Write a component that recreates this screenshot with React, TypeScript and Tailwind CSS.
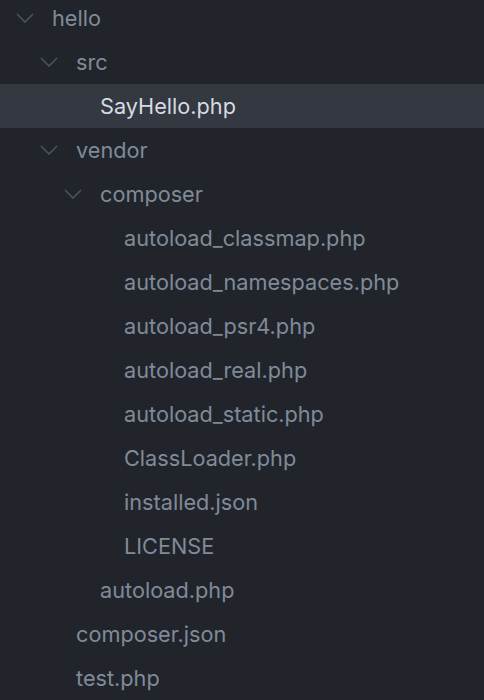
import React from 'react';

interface Node {
  name: string;
  depth: number;
  folder?: boolean;
  selected?: boolean;
}

const tree: Node[] = [
  { name: 'hello', depth: 0, folder: true },
  { name: 'src', depth: 1, folder: true },
  { name: 'SayHello.php', depth: 2, selected: true },
  { name: 'vendor', depth: 1, folder: true },
  { name: 'composer', depth: 2, folder: true },
  { name: 'autoload_classmap.php', depth: 3 },
  { name: 'autoload_namespaces.php', depth: 3 },
  { name: 'autoload_psr4.php', depth: 3 },
  { name: 'autoload_real.php', depth: 3 },
  { name: 'autoload_static.php', depth: 3 },
  { name: 'ClassLoader.php', depth: 3 },
  { name: 'installed.json', depth: 3 },
  { name: 'LICENSE', depth: 3 },
  { name: 'autoload.php', depth: 2 },
  { name: 'composer.json', depth: 1 },
  { name: 'test.php', depth: 1 },
];

const pad = ['pl-[16px]', 'pl-[40px]', 'pl-[64px]', 'pl-[88px]'];

const Chevron = () => (
  <svg width="18" height="10" viewBox="0 0 18 10" className="shrink-0">
    <path d="M1 1 L9 9 L17 1" fill="none" stroke="#4b5361" strokeWidth="1.6" />
  </svg>
);

export default function App() {
  return (
    <div className="h-[700px] w-[484px] overflow-hidden bg-[#21252b] font-['Inter',sans-serif]">
      <ul className="-mt-1">
        {tree.map((n) => (
          <li
            key={n.name + n.depth}
            className={`flex h-[44px] items-center ${pad[n.depth]} ${n.selected ? 'bg-[#333841] text-[#d7dae0]' : 'text-[#808a99]'}`}
          >
            <span className="flex w-[36px] shrink-0 items-center">{n.folder && <Chevron />}</span>
            <span className="pt-[1px] text-[21.7px] leading-none">{n.name}</span>
          </li>
        ))}
      </ul>
    </div>
  );
}
